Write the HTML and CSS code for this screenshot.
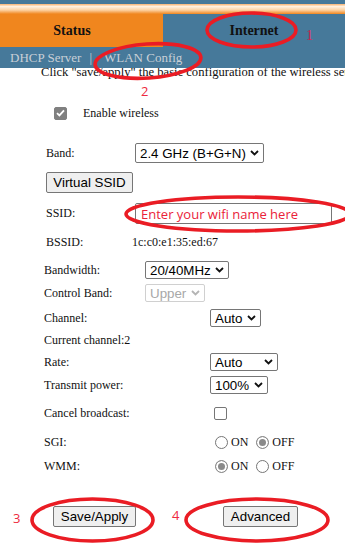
FILE: index.html
```html
<!DOCTYPE html>
<html lang="en">
<head>
<meta charset="utf-8">
<title>WLAN Config</title>
<link rel="stylesheet" href="styles.css">
</head>
<body>
<div class="page">
  <header class="header">
    <div class="topbar"></div>
    <div class="glow"></div>
    <nav class="tabs">
      <div class="tab tab-status">Status</div>
      <div class="tab tab-internet">Internet</div>
    </nav>
    <div class="subnav">
      <span>DHCP Server</span><span class="sep">|</span><span>WLAN Config</span>
    </div>
  </header>

  <main class="content">
    <div class="intro"><p>Click "save/apply" the basic configuration of the wireless settings</p></div>

    <div class="row r-enable">
      <span class="cb checked"><svg width="9" height="8" viewBox="0 0 9 8"><path d="M1 4.2 L3.4 6.4 L8 1.4" fill="none" stroke="#fff" stroke-width="1.8"/></svg></span>
      <span class="enable-label">Enable wireless</span>
    </div>

    <div class="row r-band">
      <span class="label la">Band:</span>
      <div class="select w-band"><span>2.4 GHz (B+G+N)</span><svg class="chev" width="9" height="6" viewBox="0 0 9 6"><path d="M1 1 L4.5 4.5 L8 1" fill="none" stroke="#111" stroke-width="1.8"/></svg></div>
    </div>

    <div class="row r-vssid">
      <button class="btn btn-vssid" type="button">Virtual SSID</button>
    </div>

    <div class="row r-ssid">
      <span class="label la">SSID:</span>
      <input class="ssid" type="text" value="Enter your wifi name here">
    </div>

    <div class="row r-bssid">
      <span class="label la bssid-l">BSSID:</span>
      <span class="value">1c:c0:e1:35:ed:67</span>
    </div>

    <div class="row r-bw">
      <span class="label lb">Bandwidth:</span>
      <div class="select w-bw"><span>20/40MHz</span><svg class="chev" width="9" height="6" viewBox="0 0 9 6"><path d="M1 1 L4.5 4.5 L8 1" fill="none" stroke="#111" stroke-width="1.8"/></svg></div>
    </div>

    <div class="row r-ctrl">
      <span class="label lb">Control Band:</span>
      <div class="select w-ctrl disabled"><span>Upper</span><svg class="chev" width="9" height="6" viewBox="0 0 9 6"><path d="M1 1 L4.5 4.5 L8 1" fill="none" stroke="#b4b4b4" stroke-width="1.8"/></svg></div>
    </div>

    <div class="row r-chan">
      <span class="label lc">Channel:</span>
      <div class="select w-chan"><span>Auto</span><svg class="chev" width="9" height="6" viewBox="0 0 9 6"><path d="M1 1 L4.5 4.5 L8 1" fill="none" stroke="#111" stroke-width="1.8"/></svg></div>
    </div>

    <div class="row r-cur">
      <span class="label">Current channel:2</span>
    </div>

    <div class="row r-rate">
      <span class="label lc">Rate:</span>
      <div class="select w-rate"><span>Auto</span><svg class="chev" width="9" height="6" viewBox="0 0 9 6"><path d="M1 1 L4.5 4.5 L8 1" fill="none" stroke="#111" stroke-width="1.8"/></svg></div>
    </div>

    <div class="row r-tx">
      <span class="label lc">Transmit power:</span>
      <div class="select w-tx"><span>100%</span><svg class="chev" width="9" height="6" viewBox="0 0 9 6"><path d="M1 1 L4.5 4.5 L8 1" fill="none" stroke="#111" stroke-width="1.8"/></svg></div>
    </div>

    <div class="row r-cancel">
      <span class="label lc">Cancel broadcast:</span>
      <span class="cb cb-cancel"></span>
    </div>

    <div class="row r-sgi">
      <span class="label lc">SGI:</span>
      <span class="radio"></span><span class="opt">ON</span>
      <span class="radio on"></span><span class="opt">OFF</span>
    </div>

    <div class="row r-wmm">
      <span class="label lc">WMM:</span>
      <span class="radio on"></span><span class="opt">ON</span>
      <span class="radio"></span><span class="opt">OFF</span>
    </div>

    <div class="row r-btns">
      <button class="btn btn-save" type="button">Save/Apply</button>
      <button class="btn btn-adv" type="button">Advanced</button>
    </div>
  </main>

  <svg class="annot" width="345" height="545" viewBox="0 0 345 545">
    <g fill="none" stroke="#ea1c24" stroke-width="3.6">
      <ellipse cx="251.5" cy="30" rx="44.5" ry="17"/>
      <ellipse cx="148" cy="61" rx="53" ry="17" transform="rotate(-4 148 61)"/>
      <ellipse cx="238" cy="214" rx="112" ry="17"/>
      <ellipse cx="92.5" cy="520" rx="60.5" ry="21"/>
      <ellipse cx="257" cy="520" rx="71" ry="21"/>
    </g>
    <text class="num num-serif" x="306" y="40">1</text>
    <text class="num" x="141" y="96">2</text>
    <text class="num" x="13" y="523">3</text>
    <text class="num" x="172" y="520">4</text>
  </svg>
</div>
</body>
</html>
```

FILE: styles.css
```css
* { box-sizing: border-box; }

html, body {
  margin: 0;
  padding: 0;
  background: #fff;
}

.page {
  position: relative;
  width: 345px;
  height: 545px;
  overflow: hidden;
  background: #fff;
  font-family: "Liberation Serif", "Times New Roman", serif;
  color: #111;
}

/* ---------- header ---------- */
.topbar {
  height: 4px;
  background: #46799a;
}

.glow {
  height: 10px;
  background: linear-gradient(#f8b270 0%, #fff1e0 25%, #fdd3a4 60%, #f0861e 100%);
}

.tabs {
  display: flex;
  height: 33px;
}

.tab {
  display: flex;
  align-items: center;
  justify-content: center;
  font-weight: bold;
  font-size: 14px;
  color: #111;
}

.tab-status {
  width: 163px;
  padding-right: 19px;
  background: #f0861e;
}

.tab-internet {
  flex: 1;
  background: #46799a;
}

.subnav {
  display: flex;
  align-items: center;
  height: 21px;
  padding-left: 10px;
  background: #46799a;
  color: #c9d0d7;
  font-size: 13px;
  white-space: nowrap;
}

.subnav .sep {
  margin: 0 12px 0 8px;
}

/* ---------- content ---------- */
.content {
  display: flex;
  flex-direction: column;
  font-size: 12px;
}

.intro {
  height: 12px;
  overflow: hidden;
  padding-left: 41px;
}

.intro p {
  margin: -3px 0 0;
  font-size: 12.6px;
  line-height: 15px;
  white-space: nowrap;
}

.row {
  display: flex;
  align-items: center;
  white-space: nowrap;
}

.label {
  flex: none;
  padding-left: 44px;
}

.la { width: 135px; padding-left: 46px; }
.bssid-l { width: 132px; }
.lb { width: 145px; }
.lc { width: 210px; }

.r-enable { height: 14px; margin-top: 26px; padding-left: 54px; }
.r-band   { height: 20px; margin-top: 23px; }
.r-vssid  { height: 21px; margin-top: 9px; padding-left: 46px; }
.r-ssid   { height: 21px; margin-top: 10px; }
.r-bssid  { height: 14px; margin-top: 11px; }
.r-bw     { height: 18px; margin-top: 12px; }
.r-ctrl   { height: 18px; margin-top: 5px; }
.r-chan   { height: 18px; margin-top: 7px; }
.r-cur    { height: 14px; margin-top: 6px; }
.r-rate   { height: 18px; margin-top: 6px; }
.r-tx     { height: 18px; margin-top: 5px; }
.r-cancel { height: 14px; margin-top: 12px; }
.r-sgi    { height: 14px; margin-top: 15px; }
.r-wmm    { height: 14px; margin-top: 10px; }
.r-btns   { height: 21px; margin-top: 33px; padding-left: 53px; gap: 87px; }

.enable-label {
  margin-left: 16px;
}

/* checkbox */
.cb {
  flex: none;
  display: inline-flex;
  align-items: center;
  justify-content: center;
  width: 13px;
  height: 13px;
  border: 1px solid #767676;
  border-radius: 2px;
  background: #fff;
}

.cb.checked {
  background: #808080;
  border-color: #808080;
}

.cb-cancel {
  margin-left: 4px;
}

/* radios */
.radio {
  flex: none;
  width: 13px;
  height: 13px;
  border: 1px solid #767676;
  border-radius: 50%;
  background: #fff;
  margin-left: 5px;
}

.radio.on {
  border-color: #8a8a8a;
  background: #8a8a8a;
  box-shadow: inset 0 0 0 2px #fff;
}

.opt {
  margin-left: 3px;
  font-size: 12px;
}

.opt + .radio {
  margin-left: 8px;
}

/* selects */
.select {
  flex: none;
  display: inline-flex;
  align-items: center;
  justify-content: space-between;
  height: 18px;
  padding: 0 4px 0 4px;
  border: 1px solid #767676;
  border-radius: 2px;
  background: #fff;
  font-family: "Liberation Sans", Arial, sans-serif;
  font-size: 13.33px;
  color: #000;
}

.select .chev {
  flex: none;
  margin-left: 4px;
}

.select.disabled {
  border-color: #d0d0d0;
  color: #a8a8a8;
}

.w-band { width: 129px; height: 20px; }
.w-bw   { width: 84px; }
.w-ctrl { width: 60px; }
.w-chan { width: 51px; }
.w-rate { width: 68px; }
.w-tx   { width: 58px; }

/* input */
.ssid {
  flex: none;
  width: 197px;
  height: 21px;
  margin: 0;
  padding: 0 5px;
  border: 1px solid #767676;
  border-radius: 2px;
  font-family: "Open Sans", "Noto Sans", sans-serif;
  font-size: 13px;
  color: #ea2239;
  background: #fff;
  outline: none;
}

.value {
  font-size: 12px;
}

/* buttons */
.btn {
  flex: none;
  height: 21px;
  margin: 0;
  padding: 0;
  border: 1px solid #767676;
  border-radius: 2px;
  background: #efefef;
  font-family: "Liberation Sans", Arial, sans-serif;
  font-size: 13.33px;
  color: #000;
}

.btn-vssid { width: 87px; }
.btn-save  { width: 83px; }
.btn-adv   { width: 75px; }

/* ---------- annotations overlay ---------- */
.annot {
  position: absolute;
  left: 0;
  top: 0;
  pointer-events: none;
}

.num {
  font-family: "Open Sans", "Noto Sans", sans-serif;
  font-size: 13px;
  fill: #ee2a3e;
}

.num-serif {
  font-family: "Liberation Serif", serif;
  font-size: 14px;
  fill: #d81e4e;
}
```
